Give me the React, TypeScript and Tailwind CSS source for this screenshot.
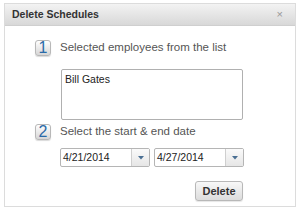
import React from 'react';

const Step: React.FC<{ n: number; label: string }> = ({ n, label }) => (
  <div className="flex items-center h-[16px]">
    <div className="w-[16px] h-[16px] rounded-[3px] border border-[#b8b8b8] bg-gradient-to-b from-[#ffffff] to-[#d6d6d6] shadow-[0_1px_1px_rgba(0,0,0,0.15)] flex items-center justify-center text-[16px] leading-none text-[#2a6aa8]">
      {n}
    </div>
    <span className="ml-[9px] text-[11.5px] leading-none text-[#555]">{label}</span>
  </div>
);

const DateBox: React.FC<{ value: string }> = ({ value }) => (
  <div className="flex w-[90px] h-[19px] border border-[#b5b5b5] rounded-[2px] bg-white">
    <div className="flex-1 flex items-center pl-[2px] text-[10.5px] text-[#222]">{value}</div>
    <div className="w-[18px] border-l border-[#cfcfcf] bg-gradient-to-b from-[#fafafa] to-[#e6e6e6] flex items-center justify-center">
      <svg width="6" height="4" viewBox="0 0 6 4">
        <path d="M0 0 L6 0 L3 3.5 Z" fill="#4a6f93" />
      </svg>
    </div>
  </div>
);

export default function App() {
  return (
    <div className="w-[300px] h-[213px] bg-white pt-[3px] pl-[4px] font-['Liberation_Sans',Arial,sans-serif]">
      <div className="w-[292px] h-[204px] border border-[#dcdcdc] bg-white">
        <div className="h-[22px] flex items-center justify-between pl-[7px] pr-[12px] bg-gradient-to-b from-[#f3f3f3] to-[#d8d8d8] border-b border-[#cfcfcf]">
          <span className="text-[10.5px] font-bold text-[#333]">Delete Schedules</span>
          <span className="text-[11px] text-[#999]">×</span>
        </div>
        <div className="pl-[30px] pt-[14px]">
          <Step n={1} label="Selected employees from the list" />
          <div className="ml-[26px] mt-[13px] w-[182px] h-[51px] border border-[#b0b0b0] rounded-[2px] px-[3px] pt-[2px] text-[10.5px] text-[#222]">
            Bill Gates
          </div>
          <div className="mt-[4px]">
            <Step n={2} label="Select the start & end date" />
          </div>
          <div className="ml-[25px] mt-[8px] flex gap-[4px]">
            <DateBox value="4/21/2014" />
            <DateBox value="4/27/2014" />
          </div>
          <div className="ml-[160px] mt-[11px]">
            <button className="w-[48px] h-[20px] rounded-[3px] border border-[#b8b8b8] bg-gradient-to-b from-[#f8f8f8] to-[#dcdcdc] text-[11px] font-bold text-[#333] shadow-[0_1px_1px_rgba(0,0,0,0.1)]">
              Delete
            </button>
          </div>
        </div>
      </div>
    </div>
  );
}
